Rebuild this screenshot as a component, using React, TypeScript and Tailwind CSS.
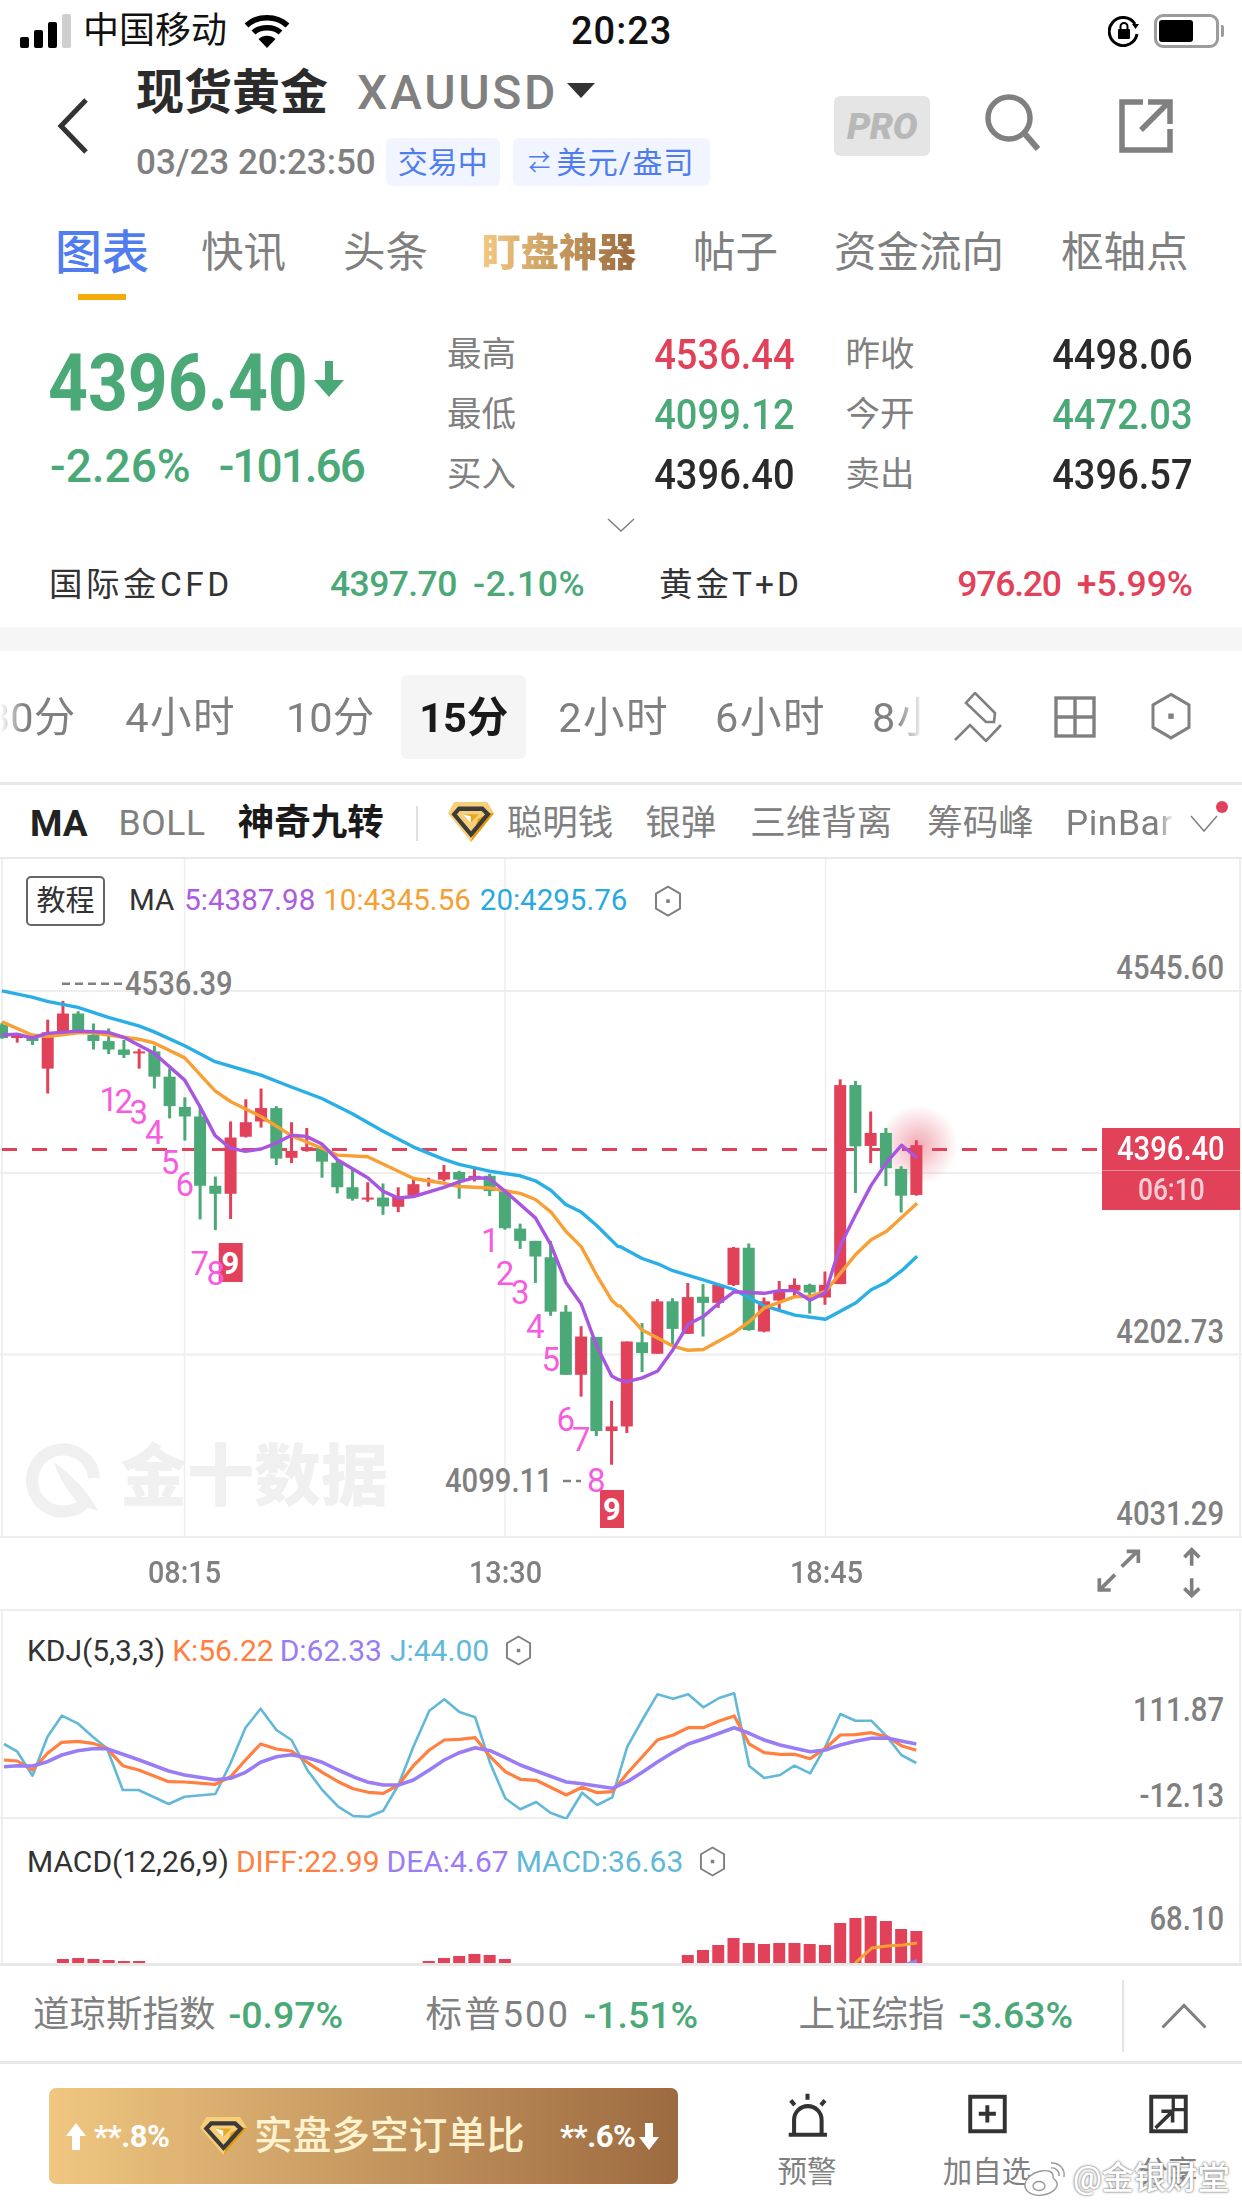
import React from "react";

const GREEN = "#4aa977";
const RED = "#e2415a";

// candle data read off the chart: body top, body bottom, wick top, wick bottom (zoomed y units)
const candles: [number, number, number, number, "r" | "g"][] = [
  [195, 230, 190, 232, "g"], [222, 230, 222, 242, "r"], [225, 238, 220, 248, "g"], [215, 310, 182, 375, "r"],
  [166, 212, 133, 225, "r"], [166, 212, 160, 215, "g"], [222, 238, 192, 260, "g"], [238, 260, 205, 272, "g"],
  [260, 274, 235, 282, "g"], [265, 270, 258, 310, "r"], [265, 331, 250, 362, "g"], [331, 408, 310, 440, "g"],
  [410, 435, 385, 498, "g"], [435, 616, 410, 704, "g"], [616, 637, 592, 732, "g"], [490, 637, 448, 703, "r"],
  [450, 488, 390, 490, "r"], [413, 448, 362, 464, "r"], [413, 545, 408, 562, "g"], [525, 543, 450, 557, "r"],
  [515, 523, 465, 527, "r"], [517, 553, 510, 595, "g"], [556, 620, 550, 636, "g"], [620, 650, 575, 655, "g"],
  [647, 651, 607, 658, "r"], [647, 670, 610, 692, "g"], [645, 671, 620, 685, "r"], [612, 642, 595, 645, "r"],
  [600, 606, 595, 618, "r"], [580, 600, 562, 605, "r"], [580, 600, 577, 650, "g"], [590, 600, 572, 605, "r"],
  [590, 630, 585, 643, "g"], [630, 727, 625, 731, "g"], [728, 760, 715, 781, "g"], [760, 801, 760, 870, "g"],
  [803, 945, 760, 956, "g"], [945, 1110, 928, 1110, "g"], [1010, 1110, 983, 1167, "r"], [1011, 1257, 1011, 1270, "g"],
  [1245, 1257, 1178, 1345, "r"], [1023, 1245, 1023, 1262, "r"], [1025, 1053, 975, 1103, "g"], [918, 1055, 912, 1055, "r"],
  [918, 990, 910, 1035, "g"], [907, 1003, 870, 1003, "r"], [906, 922, 873, 1010, "g"], [875, 922, 875, 935, "r"],
  [778, 875, 776, 878, "r"], [778, 993, 767, 995, "g"], [918, 997, 908, 999, "r"], [893, 916, 865, 944, "r"],
  [875, 890, 858, 905, "r"], [875, 895, 872, 950, "g"], [875, 908, 840, 927, "r"], [353, 873, 338, 873, "r"],
  [353, 513, 342, 635, "g"], [478, 512, 422, 557, "r"], [478, 570, 465, 617, "g"], [572, 642, 565, 686, "g"],
  [510, 640, 497, 642, "r"],
];

const zy = (z: number) => 950 + z * 0.3827;
const candleX = (i: number) => 1.98 + 15.24 * i;

function maLine(left: number[][], right: number[][]) {
  const a = left.map(([x, y]) => `${(x * 0.3954).toFixed(1)},${zy(y).toFixed(1)}`);
  const b = right.map(([x, y]) => `${(620 + x * 0.3967).toFixed(1)},${zy(y).toFixed(1)}`);
  return [...a, ...b].join(" ");
}

const ma20 = maLine(
  [[5,107],[81,123],[120,134],[197,150],[274,176],[351,198],[390,214],[467,250],[544,292],[660,327],[737,358],[814,388],[891,428],[968,473],[1046,515],[1123,547],[1161,560],[1238,578],[1316,590],[1354,603],[1393,628],[1431,665],[1470,685],[1509,720],[1563,775]],
  [[0,775],[56,806],[95,820],[133,838],[210,862],[287,887],[364,930],[441,954],[518,965],[595,922],[633,888],[672,868],[710,838],[749,800]],
);
const ma10 = maLine(
  [[5,188],[81,222],[120,226],[197,216],[236,216],[313,228],[351,233],[390,243],[467,282],[544,368],[583,396],[660,435],[737,485],[814,518],[853,536],[930,540],[1046,597],[1123,610],[1161,618],[1238,622],[1316,636],[1354,652],[1393,684],[1431,735],[1470,775],[1509,850],[1547,915],[1563,930]],
  [[0,930],[56,993],[133,1035],[172,1046],[210,1044],[287,1000],[325,972],[364,935],[441,906],[479,905],[518,892],[595,795],[633,757],[672,735],[749,662]],
);
const ma5 = maLine(
  [[5,222],[43,220],[81,230],[120,218],[197,212],[274,215],[313,228],[390,270],[467,340],[506,410],[544,485],[583,518],[621,526],[660,520],[698,505],[737,484],[775,487],[814,507],[853,548],[930,595],[968,630],[1007,648],[1046,644],[1123,620],[1161,606],[1200,595],[1238,597],[1277,630],[1354,700],[1393,770],[1431,868],[1470,925],[1509,1035],[1547,1113],[1563,1122]],
  [[0,1124],[18,1128],[56,1118],[95,1100],[133,1045],[172,978],[210,958],[249,923],[287,893],[325,895],[364,897],[402,890],[441,890],[479,915],[518,895],[556,770],[595,690],[633,615],[672,555],[710,510],[749,543]],
);

const nineMarks: [string, number, number][] = [
  ["1", 275, 390], ["2", 313, 395], ["3", 351, 425], ["4", 390, 477], ["5", 430, 555], ["6", 467, 612], ["7", 505, 820], ["8", 546, 845],
  ["1", 1240, 760], ["2", 1277, 845], ["3", 1316, 895], ["4", 1354, 985], ["5", 1393, 1070], ["6", 1431, 1228], ["7", 1470, 1280], ["8", 1508, 1385],
];

function kdjLine(points: number[][]) {
  return points.map(([x, y]) => `${(x * 0.792).toFixed(1)},${(1600 + y / 3).toFixed(1)}`).join(" ");
}

const kLine = kdjLine([[5,480],[22,483],[41,510],[60,460],[78,427],[98,424],[117,430],[135,445],[155,497],[175,510],[213,545],[233,546],[272,553],[291,530],[310,480],[329,432],[349,447],[368,453],[388,487],[407,517],[427,545],[446,566],[465,577],[484,580],[503,555],[522,497],[542,450],[561,420],[580,418],[600,413],[619,470],[638,515],[657,538],[677,541],[715,585],[735,562],[754,578],[773,575],[792,520],[811,470],[830,420],[850,405],[869,383],[888,383],[908,363],[927,348],[946,432],[965,458],[985,463],[1003,463],[1023,476],[1042,445],[1061,405],[1080,404],[1100,398],[1120,410],[1138,437],[1157,451]]);
const dLine = kdjLine([[5,500],[22,497],[41,498],[60,485],[78,465],[98,452],[117,446],[135,446],[155,463],[175,479],[213,513],[233,525],[272,539],[291,535],[310,517],[329,487],[349,470],[368,464],[388,473],[407,487],[427,510],[446,530],[465,547],[484,555],[503,555],[522,540],[542,510],[561,480],[580,458],[600,443],[619,452],[638,473],[657,495],[677,513],[715,546],[735,551],[754,558],[773,565],[792,545],[811,517],[830,486],[850,457],[869,432],[888,417],[908,400],[927,383],[946,400],[965,420],[985,435],[1003,445],[1023,455],[1042,450],[1061,435],[1080,424],[1100,415],[1120,414],[1138,423],[1157,432]]);
const jLine = kdjLine([[5,432],[22,455],[41,527],[60,410],[78,347],[98,370],[117,410],[135,445],[155,570],[175,570],[213,612],[233,590],[272,582],[291,490],[310,383],[329,326],[349,390],[368,420],[388,510],[407,570],[427,620],[446,648],[465,650],[484,632],[503,555],[522,440],[542,332],[561,298],[580,336],[600,352],[619,490],[638,595],[657,628],[677,606],[695,638],[715,656],[735,578],[754,615],[773,592],[792,440],[811,360],[830,283],[850,296],[869,283],[888,322],[908,294],[927,280],[946,498],[965,534],[985,525],[1003,497],[1023,520],[1042,440],[1061,342],[1080,362],[1100,362],[1120,410],[1138,465],[1157,489]]);

// MACD histogram: candle index -> bar top in page px
const macdBars: [number, number][] = [
  [4,1961],[5,1960],[6,1961],[7,1962],[8,1963],[9,1963],
  [28,1963],[29,1960],[30,1958],[31,1956],[32,1957],[33,1961],
  [45,1957],[46,1952],[47,1947],[48,1940],[49,1945],[50,1946],[51,1945],[52,1945],[53,1946],[54,1947],[55,1925],[56,1920],[57,1918],[58,1923],[59,1931],[60,1933],
];

function Hex({ size = 28 }: { size?: number }) {
  return (
    <svg width={size} height={size * 1.15} viewBox="0 0 28 32" fill="none">
      <path d="M14 1.5 26 8.5V23.5L14 30.5 2 23.5V8.5Z" stroke="#808080" strokeWidth="2" />
      <rect x="12.2" y="14.2" width="3.6" height="3.6" fill="#808080" />
    </svg>
  );
}

function Diamond({ className }: { className?: string }) {
  return (
    <svg className={className} viewBox="30 50 150 118" preserveAspectRatio="none">
      <path d="M50 50H158L180 83 105 168 30 83Z" fill="#f8cf78" />
      <path d="M180 83 105 168 128 100 160 83Z" fill="#e39a0b" />
      <path d="M66 70H142L160 86 105 146 50 86Z" fill="none" stroke="#3b3b3b" strokeWidth="13" />
      <path d="M78 86 104 112 130 86Z" fill="#e8a820" />
      <path d="M78 86 104 112 104 92Z" fill="#ffffff" />
    </svg>
  );
}

// chart scale digits: squeezed Roboto to stand in for the app's condensed cut
function AxisText({ x, y, end, children }: { x: number; y: number; end?: boolean; children: string }) {
  return (
    <text
      transform={`translate(${x} ${y}) scale(0.885 1)`}
      textAnchor={end ? "end" : "start"}
      dominantBaseline="central"
      className="fill-[#808080] text-[33px] font-medium"
    >
      {children}
    </text>
  );
}

function StatusBar() {
  return (
    <div className="flex h-[60px] items-center pt-[2px]">
      <svg className="ml-[20px]" width="52" height="34" viewBox="0 0 52 34">
        <rect x="0" y="23" width="9" height="11" rx="2" fill="#000" />
        <rect x="14" y="16" width="9" height="18" rx="2" fill="#000" />
        <rect x="28" y="8" width="9" height="26" rx="2" fill="#000" />
        <rect x="42" y="0" width="9" height="34" rx="2" fill="#cfcfcf" />
      </svg>
      <span className="ml-[11px] text-[36px] leading-none text-[#111]">中国移动</span>
      <svg className="ml-[17px]" width="46" height="34" viewBox="0 0 46 34" fill="none" stroke="#000" strokeWidth="5.5">
        <path d="M2.5 11.5C13 1 33 1 43.5 11.5" />
        <path d="M9.5 18.5C16 12 30 12 36.5 18.5" />
        <path d="M23 34 14.5 25C19 20.5 27 20.5 31.5 25Z" fill="#000" stroke="none" />
      </svg>
      <span className="ml-[281px] w-[102px] text-[38px] leading-none font-medium tracking-[1px] text-[#111]">20:23</span>
      <svg className="ml-[435px]" width="32" height="32" viewBox="0 0 32 32" fill="none">
        <path d="M27 9A14 14 0 1 0 29 19" stroke="#000" strokeWidth="3" />
        <path d="M24 9H31L27.5 14Z" fill="#000" />
        <rect x="10" y="14" width="12" height="10" rx="1" fill="#000" />
        <path d="M12.5 14V11.5A3.5 3.5 0 0 1 19.5 11.5V14" stroke="#000" strokeWidth="2" />
      </svg>
      <div className="ml-[14px] flex h-[34px] w-[65px] items-center rounded-[9px] border-[3px] border-[#9c9c9c] pl-[2px]">
        <div className="h-[22px] w-[34px] rounded-[3px] bg-black" />
      </div>
      <div className="ml-[2px] h-[12px] w-[3px] rounded-r-[2px] bg-[#9c9c9c]" />
    </div>
  );
}

function Header() {
  return (
    <div className="flex h-[140px] items-start">
      <svg className="ml-[56px] mt-[38px]" width="34" height="56" viewBox="0 0 34 56" fill="none">
        <path d="M30 2 5 28 30 54" stroke="#333" strokeWidth="5" />
      </svg>
      <div className="ml-[46px] flex w-[574px] flex-col">
        <div className="mt-[5px] flex h-[56px] items-center">
          <span className="text-[48px] leading-none font-bold text-[#2b2b2b]">现货黄金</span>
          <span className="ml-[29px] text-[48px] leading-none font-medium tracking-[2.7px] text-[#808080]">XAUUSD</span>
          <div className="ml-[9px] mb-[6px] h-0 w-0 border-x-[14px] border-t-[15px] border-x-transparent border-t-[#333]" />
        </div>
        <div className="mt-[17px] flex h-[48px] items-center">
          <span className="w-[251px] text-[35px] leading-none font-medium text-[#808080]">03/23 20:23:50</span>
          <span className="flex h-[48px] w-[115px] items-center justify-center rounded-[6px] bg-[#f0f5ff] text-[30px] text-[#4f7df0]">交易中</span>
          <span className="ml-[13px] flex h-[48px] w-[198px] items-center justify-center rounded-[6px] bg-[#f0f5ff] text-[30px] tracking-[1.2px] text-[#4f7df0]">
            <span className="mr-[5px] text-[22px]">⇄</span>美元/盎司
          </span>
        </div>
      </div>
      <div className="ml-[124px] mt-[36px] flex h-[60px] w-[96px] items-center justify-center rounded-[6px] bg-[#e5e5e5]">
        <span className="text-[37px] leading-none font-black italic tracking-[-0.5px] text-[#b8b8b8]">PRO</span>
      </div>
      <svg className="ml-[55px] mt-[34px]" width="60" height="64" viewBox="0 0 60 64" fill="none" stroke="#808080">
        <circle cx="24" cy="24" r="21" strokeWidth="5.5" />
        <path d="M40 40 53 55" strokeWidth="6" />
      </svg>
      <svg className="ml-[74px] mt-[39px]" width="54" height="54" viewBox="0 0 54 54" fill="none" stroke="#808080" strokeWidth="5.5">
        <path d="M24 3H3V51H51V30" />
        <path d="M22 31 48 5" />
        <path d="M29 3H51V25" />
      </svg>
    </div>
  );
}

function Tabs() {
  return (
    <div className="flex h-[105px] items-start pt-[29px] text-[42.5px] leading-[48px] text-[#808080]">
      <div className="ml-[55px] flex flex-col items-center">
        <span className="text-[47px] font-medium text-[#4f7df0]">图表</span>
        <div className="mt-[17px] h-[6px] w-[48px] bg-[#f5ab0a]" />
      </div>
      <span className="ml-[52px]">快讯</span>
      <span className="ml-[57px]">头条</span>
      <span className="ml-[54px] bg-[linear-gradient(90deg,#f3c981,#9a6a3e)] bg-clip-text text-[38.5px] font-black text-transparent">盯盘神器</span>
      <span className="ml-[57px]">帖子</span>
      <span className="ml-[56px]">资金流向</span>
      <span className="ml-[57px]">枢轴点</span>
    </div>
  );
}

function Stat({ label, value, color }: { label: string; value: string; color: string }) {
  return (
    <div className="flex h-[60px] items-center justify-between">
      <span className="text-[34.5px] leading-none text-[#808080]">{label}</span>
      <span className="origin-right scale-x-[0.885] text-[43px] leading-none font-medium" style={{ color }}>{value}</span>
    </div>
  );
}

function Quote() {
  return (
    <div className="h-[322px] pt-[1px]">
      <div className="flex pt-[18px]">
        <div className="ml-[50px] w-[397px]">
          <div className="mt-[19px] flex h-[80px] items-center text-[#4aa977]">
            <span className="ml-[-2px] w-[257px] origin-left scale-x-[0.87] text-[80px] leading-none font-bold whitespace-nowrap">4396.40</span>
            <svg className="ml-[9px] mt-[-8px]" width="30" height="36" viewBox="0 0 30 36">
              <path d="M11 0H19V19H30L15 36 0 19H11Z" fill="#4aa977" />
            </svg>
          </div>
          <div className="mt-[18px] flex h-[50px] items-center text-[46px] leading-none font-medium text-[#4aa977]">
            <span>-2.26%</span>
            <span className="ml-[28px] tracking-[-2px]">-101.66</span>
          </div>
        </div>
        <div className="grid w-[746px] grid-cols-2 gap-x-[51px]">
          <Stat label="最高" value="4536.44" color={RED} />
          <Stat label="昨收" value="4498.06" color="#2b2b2b" />
          <Stat label="最低" value="4099.12" color={GREEN} />
          <Stat label="今开" value="4472.03" color={GREEN} />
          <Stat label="买入" value="4396.40" color="#2b2b2b" />
          <Stat label="卖出" value="4396.57" color="#2b2b2b" />
        </div>
      </div>
      <div className="mt-[14px] flex justify-center">
        <svg width="28" height="14" viewBox="0 0 28 14" fill="none">
          <path d="M1 1 14 13 27 1" stroke="#808080" strokeWidth="1.5" />
        </svg>
      </div>
      <div className="mt-[28px] flex h-[50px] items-center px-[49px] text-[33.5px] leading-none text-[#333]">
        <span className="w-[281px] tracking-[3.5px]">国际金CFD</span>
        <span className="w-[143px] text-[35.5px] font-medium tracking-[-0.6px] text-[#4aa977]">4397.70</span>
        <span className="w-[186px] text-[35.5px] font-medium tracking-[0.6px] text-[#4aa977]">-2.10%</span>
        <span className="tracking-[3px]">黄金T+D</span>
        <span className="ml-auto text-[35.5px] font-medium tracking-[-1.2px] text-[#e2415a]">976.20</span>
        <span className="ml-[16px] text-[35.5px] font-medium text-[#e2415a]">+5.99%</span>
      </div>
    </div>
  );
}

function Timeframes() {
  const items = [
    { t: "30分", cls: "ml-[-31px] text-[#808080]" },
    { t: "4小时", cls: "tracking-[1.5px] text-[#808080]" },
    { t: "10分", cls: "text-[#808080]" },
    { t: "15分", cls: "ml-[-5px] rounded-[6px] bg-[#f5f5f5] font-bold text-[#1a1a1a]" },
    { t: "2小时", cls: "tracking-[1.5px] text-[#808080]" },
    { t: "6小时", cls: "ml-[-4px] tracking-[1.5px] text-[#808080]" },
    { t: "8小时", cls: "ml-[-4px] tracking-[1.5px] text-[#808080]" },
  ];
  return (
    <div className="flex h-[134px] items-center border-b-[3px] border-[#e8e8e8]">
      <div className="flex w-[932px] items-center gap-[14px] overflow-hidden [mask-image:linear-gradient(90deg,transparent_0,#000_24px,#000_895px,transparent_925px)]">
        {items.map(({ t, cls }) => (
          <span key={t} className={`flex h-[84px] shrink-0 items-center px-[18px] pt-[3px] text-[41.5px] ${cls}`}>
            {t}
          </span>
        ))}
      </div>
      <svg className="ml-[22px]" width="48" height="50" viewBox="0 0 48 50" fill="none" stroke="#808080" strokeWidth="2.6">
        <path d="M21 1 41 21 40 30 32 30 12 11Z" />
        <path d="M1 48 16 33 32 49 47 33" />
      </svg>
      <svg className="ml-[52px]" width="42" height="42" viewBox="0 0 42 42" fill="none" stroke="#808080" strokeWidth="3.4">
        <rect x="2" y="2" width="38" height="38" />
        <path d="M21 2V40M2 21H40" />
      </svg>
      <div className="ml-[54px]"><Hex size={42} /></div>
    </div>
  );
}

function IndicatorRow() {
  return (
    <div className="flex h-[74px] items-center border-b-[2px] border-[#e8e8e8] pt-[5px] text-[35.5px] leading-none text-[#808080]">
      <span className="ml-[30px] text-[37px] font-bold text-[#222]">MA</span>
      <span className="ml-[31px] tracking-[0.6px]">BOLL</span>
      <span className="ml-[32px] text-[36.5px] font-bold text-[#1a1a1a]">神奇九转</span>
      <div className="ml-[32px] h-[35px] w-[2px] bg-[#e0e0e0]" />
      <Diamond className="ml-[30px] mt-[-4px] h-[40px] w-[46px]" />
      <span className="ml-[13px]">聪明钱</span>
      <span className="ml-[32px]">银弹</span>
      <span className="ml-[34px]">三维背离</span>
      <span className="ml-[35px]">筹码峰</span>
      <span className="ml-[32px] w-[108px] overflow-hidden tracking-[0.5px] whitespace-nowrap [mask-image:linear-gradient(90deg,#000_85%,transparent)]">PinBar</span>
      <div className="relative ml-[16px]">
        <svg width="28" height="18" viewBox="0 0 28 18" fill="none">
          <path d="M1 1 14 16 27 1" stroke="#808080" strokeWidth="1.5" />
        </svg>
        <div className="absolute right-[-10px] top-[-14px] h-[12px] w-[12px] rounded-full bg-[#e2415a]" />
      </div>
    </div>
  );
}

function MainChart() {
  return (
    <div className="relative h-[679px] border-b-[2px] border-[#eeeeee]">
      <svg className="absolute inset-0" width="1242" height="677" viewBox="0 859 1242 677">
        <defs>
          <radialGradient id="glow">
            <stop offset="0" stopColor="#e2415a" stopOpacity="0.45" />
            <stop offset="1" stopColor="#e2415a" stopOpacity="0" />
          </radialGradient>
        </defs>
        <path d="M2 859V1537M1240 859V1537" stroke="#eeeeee" strokeWidth="2" />
        <path d="M184.5 859V1537M505 859V1537M825.5 859V1537" stroke="#eeeeee" strokeWidth="1.5" />
        <path d="M0 991H1242M0 1173H1242M0 1354.5H1242" stroke="#eeeeee" strokeWidth="2" />

        {/* watermark */}
        <g fill="none" stroke="#f0f0f0">
          <path d="M88 1499A31 31 0 1 1 94 1478" strokeWidth="12" />
        </g>
        <path d="M54 1462C64 1470 86 1486 98 1511L78 1505C78 1500 62 1488 54 1462Z" fill="#f0f0f0" />
        <text x="120" y="1477" dominantBaseline="central" fontSize="67" fontWeight="900" fill="#f0f0f0">金十数据</text>

        <circle cx="918" cy="1145" r="40" fill="url(#glow)" />
        <path d="M2 1149.4H1102" stroke={RED} strokeWidth="3" strokeDasharray="15 15" />

        {candles.map(([top, bottom, wickTop, wickBottom, dir], i) => {
          const x = candleX(i);
          const color = dir === "r" ? RED : GREEN;
          return (
            <g key={i} fill={color}>
              <rect x={x - 1.5} y={zy(wickTop)} width="3" height={zy(wickBottom) - zy(wickTop)} />
              <rect x={x - 6} y={zy(top)} width="12" height={Math.max(zy(bottom) - zy(top), 2)} />
            </g>
          );
        })}

        <polyline points={ma20} fill="none" stroke="#2aaee6" strokeWidth="3.4" strokeLinejoin="round" />
        <polyline points={ma10} fill="none" stroke="#f9a035" strokeWidth="3.4" strokeLinejoin="round" />
        <polyline points={ma5} fill="none" stroke="#a855e0" strokeWidth="3.4" strokeLinejoin="round" />

        <rect x="218.7" y="1243" width="24" height="39" fill={RED} />
        <rect x="600" y="1490" width="24" height="38" fill={RED} />
        <text x="230.5" y="1263" textAnchor="middle" dominantBaseline="central" fontSize="31" fontWeight="700" fill="#fff">9</text>
        <text x="612" y="1509" textAnchor="middle" dominantBaseline="central" fontSize="31" fontWeight="700" fill="#fff">9</text>
        {nineMarks.map(([n, x, y], i) => (
          <text key={i} x={x * 0.3954} y={zy(y)} textAnchor="middle" dominantBaseline="central" fontSize="33" fill="#f75be0">{n}</text>
        ))}

        <path d="M62 983.7H122M563 1481H581" stroke="#808080" strokeWidth="2.5" strokeDasharray="8 5" />
        <AxisText x={125} y={984}>4536.39</AxisText>
        <AxisText x={445} y={1481}>4099.11</AxisText>
        <AxisText x={1224} y={968} end>4545.60</AxisText>
        <AxisText x={1224} y={1331.5} end>4202.73</AxisText>
        <AxisText x={1224} y={1514} end>4031.29</AxisText>
      </svg>

      <div className="relative flex items-center pl-[26px] pt-[17px] text-[29.5px] leading-none">
        <span className="flex h-[50px] w-[79px] items-center justify-center rounded-[5px] border-[2px] border-[#666] bg-white text-[29px] text-[#333]">教程</span>
        <span className="ml-[24px] text-[#333]">MA</span>
        <span className="ml-[10px] text-[#ad5be0]">5:4387.98</span>
        <span className="ml-[8px] text-[#f5a033]">10:4345.56</span>
        <span className="ml-[9px] text-[#2aa9e0]">20:4295.76</span>
        <div className="ml-[27px]"><Hex size={28} /></div>
      </div>

      <div className="absolute left-[1102px] top-[269px] flex h-[82px] w-[138px] flex-col bg-[#e2415a] font-medium">
        <div className="flex h-[43px] items-center justify-center border-b border-[#ee8e9c] text-white">
          <span className="scale-x-[0.885] text-[33px]">4396.40</span>
        </div>
        <div className="flex h-[39px] items-center justify-center text-[#f9cdd4]">
          <span className="scale-x-[0.85] text-[31px]">06:10</span>
        </div>
      </div>
    </div>
  );
}

function TimeAxis() {
  return (
    <div className="flex h-[71px] items-center text-[31px] font-medium text-[#808080]">
      <span className="ml-[23.5px] w-[321px] scale-x-[0.93] text-center">08:15</span>
      <span className="w-[321px] scale-x-[0.93] text-center">13:30</span>
      <span className="w-[321px] scale-x-[0.93] text-center">18:45</span>
      <svg className="ml-[93px]" width="150" height="70" viewBox="0 0 450 210" fill="none" stroke="#808080" strokeWidth="11">
        <path d="M125 83 172 37M140 37H175V72" />
        <path d="M105 107 60 152M58 118V153H92" />
        <path d="M335 80V35M313 55 335 32 358 55" />
        <path d="M335 118V170M313 148 335 170 358 148" />
      </svg>
    </div>
  );
}

function KdjPanel() {
  return (
    <div className="relative h-[210px] border-t-[2px] border-b-[2px] border-[#eeeeee]">
      <svg className="absolute inset-0" width="1242" height="208" viewBox="0 1611 1242 208">
        <path d="M2 1611V1819M1240 1611V1819" stroke="#eeeeee" strokeWidth="2" />
        <polyline points={jLine} fill="none" stroke="#62b8d8" strokeWidth="2.6" strokeLinejoin="round" />
        <polyline points={kLine} fill="none" stroke="#ff8040" strokeWidth="3.2" strokeLinejoin="round" />
        <polyline points={dLine} fill="none" stroke="#9a7cf5" strokeWidth="3.6" strokeLinejoin="round" />
        <AxisText x={1224} y={1710} end>111.87</AxisText>
        <AxisText x={1224} y={1796} end>-12.13</AxisText>
      </svg>
      <div className="relative flex items-center pl-[27px] pt-[24px] text-[30px] leading-none">
        <span className="text-[#333]">KDJ(5,3,3)</span>
        <span className="ml-[7px] text-[#ff8040]">K:56.22</span>
        <span className="ml-[6px] text-[#9a7cf5]">D:62.33</span>
        <span className="ml-[8px] text-[#62b8d8]">J:44.00</span>
        <div className="ml-[16px]"><Hex size={27} /></div>
      </div>
    </div>
  );
}

function MacdPanel() {
  return (
    <div className="relative h-[147px] border-b-[3px] border-[#e8e8e8]">
      <svg className="absolute inset-0" width="1242" height="144" viewBox="0 1821 1242 144">
        <path d="M2 1821V1965M1240 1821V1965" stroke="#eeeeee" strokeWidth="2" />
        {macdBars.map(([i, top]) => (
          <rect key={i} x={candleX(i) - 6} y={top} width="12" height={1965 - top} fill={RED} />
        ))}
        <polyline points="855,1965 872,1950 887,1948 903,1947 917,1945" fill="none" stroke="#f9a035" strokeWidth="3" />
        <path d="M905 1965 917 1961V1965Z" fill="#9a7cf5" />
        <AxisText x={1224} y={1920.5} end>68.10</AxisText>
      </svg>
      <div className="relative flex items-center pl-[27px] pt-[27px] text-[30px] leading-none">
        <span className="text-[#333]">MACD(12,26,9)</span>
        <span className="ml-[7px] text-[#ff8040]">DIFF:22.99</span>
        <span className="ml-[7px] text-[#9a7cf5]">DEA:4.67</span>
        <span className="ml-[7px] text-[#62b8d8]">MACD:36.63</span>
        <div className="ml-[16px]"><Hex size={27} /></div>
      </div>
    </div>
  );
}

function IndexBar() {
  const pct = "text-[37.5px] font-medium text-[#4aa977]";
  return (
    <div className="flex h-[98px] items-center border-b-[3px] border-[#e8e8e8] pt-[4px] text-[36.5px] leading-none whitespace-nowrap text-[#808080]">
      <span className="ml-[33px]">道琼斯指数</span>
      <span className={`ml-[13px] w-[112px] ${pct}`}>-0.97%</span>
      <span className="ml-[85px] w-[143px] tracking-[2px]">标普500</span>
      <span className={`ml-[15px] w-[112px] ${pct}`}>-1.51%</span>
      <span className="ml-[103px] w-[146px]">上证综指</span>
      <span className={`ml-[14px] w-[111px] ${pct}`}>-3.63%</span>
      <div className="ml-[52px] h-[72px] w-[2px] bg-[#e4e4e4]" />
      <svg className="ml-[37px]" width="46" height="26" viewBox="0 0 46 26" fill="none">
        <path d="M1.5 24.5 23 2.5 44.5 24.5" stroke="#808080" strokeWidth="3" />
      </svg>
    </div>
  );
}

function BottomBar() {
  const label = "mt-[20px] text-[29.5px] leading-none text-[#808080]";
  return (
    <div className="relative flex h-[144px] pt-[24px]">
      <div className="ml-[49px] flex h-[96px] w-[629px] items-center rounded-[7px] bg-[linear-gradient(90deg,#f0c781,#9c6a40)] font-bold text-white">
        <svg className="ml-[17px]" width="20" height="27" viewBox="0 0 20 27" fill="#fff">
          <path d="M10 0 20 13H14V27H6V13H0Z" />
        </svg>
        <span className="ml-[8px] w-[78px] text-[31px] leading-none tracking-[-0.5px]">**.8%</span>
        <Diamond className="ml-[28px] h-[38px] w-[47px]" />
        <span className="ml-[7px] w-[272px] text-[38.7px] leading-none font-medium text-[#fff2cf]">实盘多空订单比</span>
        <span className="ml-[34px] w-[79px] text-[31px] leading-none tracking-[-0.5px]">**.6%</span>
        <svg width="20" height="27" viewBox="0 0 20 27" fill="#fff">
          <path d="M10 27 20 14H14V0H6V14H0Z" />
        </svg>
      </div>
      <div className="absolute left-[747px] top-[26px] flex w-[120px] flex-col items-center">
        <svg width="47" height="48" viewBox="70 15 140 143" fill="none" stroke="#333" strokeWidth="12">
          <path d="M84 148H198" />
          <path d="M100 148V104A41 41 0 0 1 182 104V148" />
          <path d="M140 26V44M90 46 102 60M192 46 180 60" />
        </svg>
        <span className={label}>预警</span>
      </div>
      <div className="absolute left-[927px] top-[26px] flex w-[120px] flex-col items-center">
        <svg width="47" height="48" viewBox="610 19 143 143" fill="none" stroke="#333" strokeWidth="12">
          <rect x="629" y="38" width="105" height="105" />
          <path d="M681 64V116M655 90H707" />
        </svg>
        <span className={label}>加自选</span>
      </div>
      <div className="absolute left-[1108px] top-[26px] flex w-[120px] flex-col items-center">
        <svg width="47" height="48" viewBox="1150 19 143 143" fill="none" stroke="#333" strokeWidth="12">
          <rect x="1169" y="38" width="105" height="105" />
          <path d="M1236 38V77H1274" strokeWidth="10" />
          <path d="M1182 133 1232 84M1200 82H1234V116" strokeWidth="11" />
        </svg>
        <span className={label}>分享</span>
      </div>
      {/* weibo watermark sits on top of the toolbar */}
      <div className="absolute left-[1023px] top-[95px] flex items-center text-[32px] leading-none font-medium text-white [text-shadow:0_0_2px_#777,0_0_3px_#999]">
        <svg width="44" height="38" viewBox="0 0 44 38" fill="#fff" stroke="#999" strokeWidth="1.4">
          <path d="M18 12C8 14 1 21 2 28 4 36 16 38 24 35 33 32 36 26 33 22 31 19 30 21 30 17 30 12 24 11 18 12Z" />
          <ellipse cx="16" cy="27" rx="6" ry="4.5" fill="none" />
          <path d="M28 4A12 12 0 0 1 41 18M28 9A7 7 0 0 1 36 17" fill="none" />
        </svg>
        <span className="ml-[6px]">@金银财堂</span>
      </div>
    </div>
  );
}

export default function App() {
  return (
    <div className="flex h-[2208px] w-[1242px] flex-col overflow-hidden bg-white [font-family:Roboto,'Noto_Sans_CJK_SC',sans-serif]">
      <StatusBar />
      <Header />
      <Tabs />
      <Quote />
      <div className="h-[24px] bg-[#f6f6f6]" />
      <Timeframes />
      <IndicatorRow />
      <MainChart />
      <TimeAxis />
      <KdjPanel />
      <MacdPanel />
      <IndexBar />
      <BottomBar />
    </div>
  );
}
